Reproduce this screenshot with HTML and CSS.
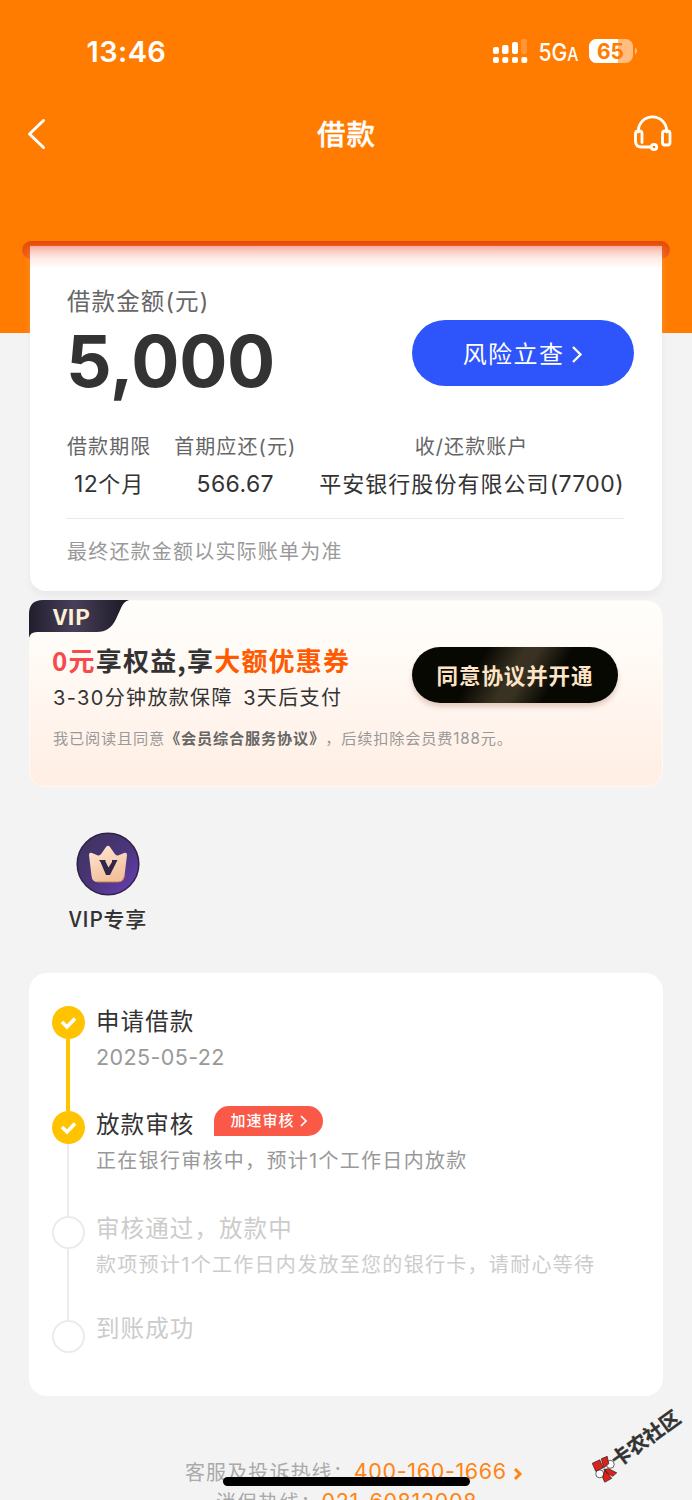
FILE: index.html
```html
<!DOCTYPE html>
<html lang="zh-CN">
<head>
<meta charset="utf-8">
<title>借款</title>
<link rel="stylesheet" href="styles.css">
</head>
<body>
<div class="screen">
  <header class="hero">
    <div class="status">
      <span class="time">13:46</span>
      <svg class="status-icons" width="150" height="30" viewBox="0 0 150 30">
        <g fill="#fff">
          <rect x="6" y="10" width="6" height="7" rx="2"/><rect x="15" y="8" width="6.500" height="9" rx="2"/><rect x="25" y="5" width="6" height="12" rx="2"/><rect x="34" y="2" width="6" height="15" rx="2" opacity=".2"/>
          <rect x="6" y="20" width="6" height="6" rx="2"/><rect x="15.300" y="20" width="6" height="6" rx="2"/><rect x="25" y="20" width="6" height="6" rx="2"/><rect x="34.300" y="20" width="6" height="6" rx="2"/>
          <text class="net" x="51.500" y="24" font-size="24" textLength="40" lengthAdjust="spacingAndGlyphs">5G<tspan font-size="18">A</tspan></text>
          <rect x="102" y="2" width="44" height="24" rx="7.500" opacity=".5"/>
          <path d="M109.500 2H131V26H109.500A7.500 7.500 0 0 1 102 18.500V9.500A7.500 7.500 0 0 1 109.500 2Z"/>
          <path d="M148 10.500Q150 11.500 150 14T148 17.500Z" opacity=".5"/>
        </g>
        <text class="battery" x="110" y="21.500" font-size="21" textLength="27" lengthAdjust="spacingAndGlyphs">65</text>
      </svg>
    </div>
    <nav class="nav">
      <svg width="22" height="34" viewBox="0 0 22 34" class="back"><path d="M18.500 3.500 4.500 17l14 13.500"/></svg>
      <h1>借款</h1>
      <svg width="40" height="40" viewBox="0 0 40 40" class="service"><path d="M6.300 18V17A14.200 14.200 0 0 1 34.700 17V18"/><path d="M10 28.500V19.500Q10 17 7.500 17H6.500Q3.500 17 3.500 20V27Q3.500 33 9.500 33H19"/><rect x="30.500" y="17" width="7.500" height="14" rx="2.500"/><circle cx="22" cy="33" r="2.700"/></svg>
    </nav>
  </header>

  <main class="content">
    <div class="slot"></div>
    <section class="loan">
      <div class="summary">
        <div>
          <div class="loan-label">借款金额(元)</div>
          <div class="amount">5,000</div>
        </div>
        <a class="risk">风险立查<svg width="12" height="20" viewBox="0 0 12 20"><path d="m2 3 7.500 7.500L2 18"/></svg></a>
      </div>
      <div class="facts">
        <div><span>借款期限</span><b><i class="num">12</i>个月</b></div>
        <div><span>首期应还(元)</span><b><i class="num">566.67</i></b></div>
        <div><span>收/还款账户</span><b>平安银行股份有限公司<i class="num">(7700)</i></b></div>
      </div>
      <div class="note">最终还款金额以实际账单为准</div>
    </section>

    <section class="vip">
      <div class="vip-tag">
        <svg width="101" height="38" viewBox="0 0 101 38">
          <defs><linearGradient id="tag"><stop stop-color="#211e2c"/><stop offset=".45" stop-color="#48405a"/><stop offset="1" stop-color="#1b1724"/></linearGradient></defs>
          <path fill="url(#tag)" d="M0 38V14Q0 0 14 0H100Q95 1 92 8L87 19Q81 32 68 32H8Q1 32 0 38Z"/>
          <text x="24" y="24.500" textLength="37" lengthAdjust="spacingAndGlyphs">VIP</text>
        </svg>
      </div>
      <div class="vip-body">
        <div class="vip-copy">
          <div class="vip-title"><em class="red">0元</em>享权益,享<em>大额优惠券</em></div>
          <div class="vip-sub">3-30分钟放款保障&nbsp; 3天后支付</div>
        </div>
        <a class="agree">同意协议并开通</a>
      </div>
      <div class="terms">我已阅读且同意<b>《会员综合服务协议》</b>，后续扣除会员费188元。</div>
    </section>

    <section class="perk">
      <svg width="64" height="64" viewBox="0 0 64 64">
        <defs>
          <linearGradient id="disc" x1="0" y1="0" x2="1" y2="1"><stop stop-color="#3d3359"/><stop offset=".5" stop-color="#493579"/><stop offset="1" stop-color="#6a3fba"/></linearGradient>
          <linearGradient id="crown" x1="0" y1="0" x2=".4" y2="1"><stop stop-color="#ffe7d4"/><stop offset="1" stop-color="#f2c19c"/></linearGradient>
        </defs>
        <circle cx="32" cy="32" r="30.800" fill="url(#disc)" stroke="#302247" stroke-width="1.500"/>
        <path d="M13 23Q13 20 16 21L22 23.500Q24 24 25.500 21.500L30 15Q32 12.500 34 15L38.500 21.500Q40 24 42 23.500L48 21Q51 20 51 23L48.500 44Q48 50 42 50H22Q16 50 15.500 44Z" fill="url(#crown)"/>
        <path d="M21 50H42Q47.500 50 48.700 43" fill="none" stroke="#c77a45" stroke-width="1"/>
        <path d="M23 28H29.500V29.500L32.500 35.500 36 30V28H41.500L34 43H30L24.500 30Z" fill="#32254b"/>
      </svg>
      <span>VIP专享</span>
    </section>

    <section class="progress">
      <div class="step done">
        <div class="rail"><svg class="dot" viewBox="0 0 33 33"><path d="m10 16 5 5 8-8.500"/></svg><i></i></div>
        <div class="step-text"><h2>申请借款</h2><p class="date">2025-05-22</p></div>
      </div>
      <div class="step done current">
        <div class="rail"><svg class="dot" viewBox="0 0 33 33"><path d="m10 16 5 5 8-8.500"/></svg><i></i></div>
        <div class="step-text"><h2>放款审核<a class="boost">加速审核<svg width="9" height="14" viewBox="0 0 9 14"><path d="m2 2 5 5-5 5"/></svg></a></h2><p>正在银行审核中，预计1个工作日内放款</p></div>
      </div>
      <div class="step todo">
        <div class="rail"><span class="dot"></span><i></i></div>
        <div class="step-text"><h2>审核通过，放款中</h2><p>款项预计1个工作日内发放至您的银行卡，请耐心等待</p></div>
      </div>
      <div class="step todo last">
        <div class="rail"><span class="dot"></span></div>
        <div class="step-text"><h2>到账成功</h2></div>
      </div>
    </section>

    <footer class="hotlines">
      <div class="line">客服及投诉热线：<a>400-160-1666</a><svg width="10" height="14" viewBox="0 0 10 14"><path d="m2 2 5 5-5 5"/></svg></div>
      <div class="line second">消保热线：<a>021-60812008</a></div>
    </footer>
  </main>

  <div class="community">
    <svg width="26" height="27" viewBox="0 0 26 27" stroke="#222" stroke-width=".7"><circle cx="18.500" cy="8.500" r="4" fill="#fff"/><circle cx="8" cy="18" r="4" fill="#fff"/><path fill="#df211b" d="M.5 7.500 8 4 11.500 12 4 15.500ZM9.500 3 15.500.5 17 8 12 12ZM12 13.500 17 13 25 17 21 20.500 16.500 18ZM13 14 17 19 20 22.500 13 26.500 11 22Z"/></svg>
    <span>卡农社区</span>
  </div>
  <div class="home-bar"></div>
</div>
</body>
</html>
```
FILE: styles.css
```css
* { box-sizing: border-box; margin: 0; padding: 0; }
body { background: #f3f3f3; font-family: Inter, "Noto Sans CJK SC", sans-serif; color: #333; text-spacing-trim: space-all; }
.screen { position: relative; width: 692px; height: 1500px; overflow: hidden; white-space: nowrap; }
svg { display: block; flex: none; }
i, em { font-style: normal; }

.hero { height: 333px; background: #ff7c00; color: #fff; }
.status { height: 104px; display: flex; justify-content: space-between; align-items: center; padding: 0 55px 0 86.5px; }
.time { margin-top: -1px; font-size: 29px; font-weight: 600; letter-spacing: .4px; }
.net { font-family: Inter, sans-serif; font-weight: 500; }
.battery { font-family: Inter, sans-serif; font-weight: 700; fill: #ff7c00; }
.nav { height: 60px; display: flex; justify-content: space-between; align-items: center; padding: 0 20px 0 25px; }
.nav h1 { font-size: 28.5px; font-weight: 500; letter-spacing: 1px; line-height: 40px; padding-left: 14px; margin-top: 2px; -webkit-text-stroke: .3px #fff; }
.back, .service { fill: none; stroke: #fff; stroke-width: 3; stroke-linecap: round; stroke-linejoin: round; }
.service { stroke-width: 2.8; }

.content { margin-top: -92px; padding: 0 29px; }
.slot { height: 18px; margin: 0 -7px; border-radius: 9px; background: linear-gradient(#e64a05, #ef6119); }
.loan { margin: -13px 1px 0; height: 345px; padding: 39px 28px 0 37px; border-radius: 0 0 16px 16px; background: linear-gradient(#f8aa9f 0, #fbd0c8 6px, #feeae6 12px, #fff 23px); box-shadow: 0 5px 9px -1px rgba(0, 0, 0, .055), 0 2px 7px rgba(255, 255, 255, .22); position: relative; }
.summary { display: flex; justify-content: space-between; align-items: flex-start; height: 144px; }
.loan-label { font-size: 23.5px; line-height: 34px; letter-spacing: 1.1px; color: #666; }
.amount { margin-top: 2px; margin-left: -1px; font-size: 71.5px; font-weight: 700; line-height: 80px; letter-spacing: -.3px; }
.risk { display: flex; align-items: center; justify-content: center; gap: 7px; width: 222px; height: 66px; margin-top: 35px; padding-bottom: 2px; border-radius: 33px; background: #2e55fb; color: #fff; font-size: 24px; letter-spacing: 1.4px; }
.risk svg { margin-top: 3px; }
.risk svg, .boost svg, .hotlines svg { fill: none; stroke: currentColor; stroke-width: 2.3; }
.facts { display: flex; justify-content: space-between; height: 90px; margin: 0 10px 0 -1px; padding: 0 0 0 1px; border-bottom: 1px solid #e9e9e9; }
.facts div { display: flex; flex-direction: column; align-items: center; gap: 1px; }
.facts span { font-size: 20px; line-height: 36px; letter-spacing: 1.1px; color: #666; }
.facts b { font-size: 22px; line-height: 36px; font-weight: 400; letter-spacing: 1.05px; }
.num { font-size: 23px; letter-spacing: .4px; }
.note { margin-top: 15px; font-size: 20px; line-height: 36px; letter-spacing: 1.2px; color: #999; }

.vip { height: 187px; margin-top: 9px; border: 1px solid #fff9f3; border-radius: 16px; background: linear-gradient(#fffefc 0, #fffcf8 20%, #fff5ee 60%, #ffeee3 100%); }
.vip-tag { height: 38px; margin: -1px 0 0 -1px; }
.vip-tag text { font: 700 21px "Noto Sans CJK SC", sans-serif; fill: #fff0d5; }
.vip-body { display: flex; justify-content: space-between; padding: 5px 44px 0 22px; height: 77px; }
.vip-title { margin-top: -2px; padding-bottom: 2px; font-family: "Noto Sans CJK SC", sans-serif; font-size: 26px; font-weight: 700; line-height: 38px; letter-spacing: 1.2px; }
.vip-title em { color: #ff5a00; }
.vip-title .red { color: #f64a4d; }
.vip-sub { padding-left: 1px; font-size: 20px; line-height: 34px; letter-spacing: 1.35px; word-spacing: -1.8px; }
.agree { width: 206px; height: 56px; margin-top: 4px; border-radius: 28px; background: linear-gradient(120deg, #080802 32%, #393222 48%, #393222 54%, #080802 68%); box-shadow: 0 4px 5px rgba(150, 80, 50, .25); color: #fde4c6; text-align: center; font-size: 21.5px; font-weight: 700; line-height: 58px; letter-spacing: .9px; }
.terms { margin: 10px 0 0 23px; font-size: 15.2px; line-height: 28px; letter-spacing: .82px; color: #999; }
.terms b { color: #666; font-weight: 700; }

.perk { width: 158px; height: 186px; padding-top: 45px; display: flex; flex-direction: column; align-items: center; }
.perk span { margin-top: 6px; font-family: "Noto Sans CJK SC", sans-serif; font-size: 21px; font-weight: 500; line-height: 32px; letter-spacing: .7px; }

.progress { height: 423px; padding: 32.5px 22px 0 22.5px; border-radius: 18px; background: #fff; }
.step { display: flex; height: 105px; gap: 11.5px; }
.step.todo { height: 104px; }
.rail { width: 33px; display: flex; flex-direction: column; align-items: center; }
.rail i { flex: 1; width: 2px; background: #ebebeb; }
.step.done:first-child .rail i { width: 4px; background: #ffc300; }
.dot { width: 33px; height: 33px; border-radius: 50%; flex: none; }
.done .dot { background: #ffc300; fill: none; stroke: #fff; stroke-width: 3.6; }
.todo .dot { border: 2px solid #ebebeb; background: #fff; }
.step-text h2 { display: flex; font-size: 23.5px; font-weight: 400; line-height: 36px; letter-spacing: 1.1px; margin-top: -2px; }
.step-text p { font-size: 20px; line-height: 36px; letter-spacing: 1.3px; color: #999; }
.step-text .date { margin-top: -1px; font-size: 21.5px; letter-spacing: .4px; }
.current h2 { margin-top: -4px; }
.todo h2 { margin-top: -5px; }
.last h2 { margin-top: -9px; }
.todo h2, .todo p { color: #ccc; }
.boost { display: flex; align-items: center; justify-content: center; gap: 5px; width: 109px; height: 30px; margin: -1px 0 0 19.5px; padding-left: 2px; border-radius: 15px 15px 15px 0; background: #fb5948; color: #fff; font-size: 15px; font-weight: 500; letter-spacing: 1px; }
.boost svg { stroke-width: 1.7; }

.hotlines { padding-top: 60px; font-size: 20px; letter-spacing: 1.1px; color: #aaa; }
.line { display: flex; align-items: center; height: 30px; padding-left: 156px; }
.line a, .line svg { color: #ff8412; }
.line a { font-size: 21.5px; letter-spacing: .65px; }
.line svg { margin: 5px 0 0 6px; stroke-width: 3; }
.second { padding-left: 187px; }

.community { position: absolute; left: 584px; top: 1431px; display: flex; align-items: center; color: #333; transform: rotate(-36deg); font-size: 20px; font-weight: 700; line-height: 30px; }
.community svg { transform: rotate(36deg); }
.community span { margin-left: -2px; -webkit-text-stroke: .3px #333; }
.home-bar { position: absolute; left: 223px; top: 1477px; width: 247px; height: 9px; border-radius: 5px; background: #000; }
```
